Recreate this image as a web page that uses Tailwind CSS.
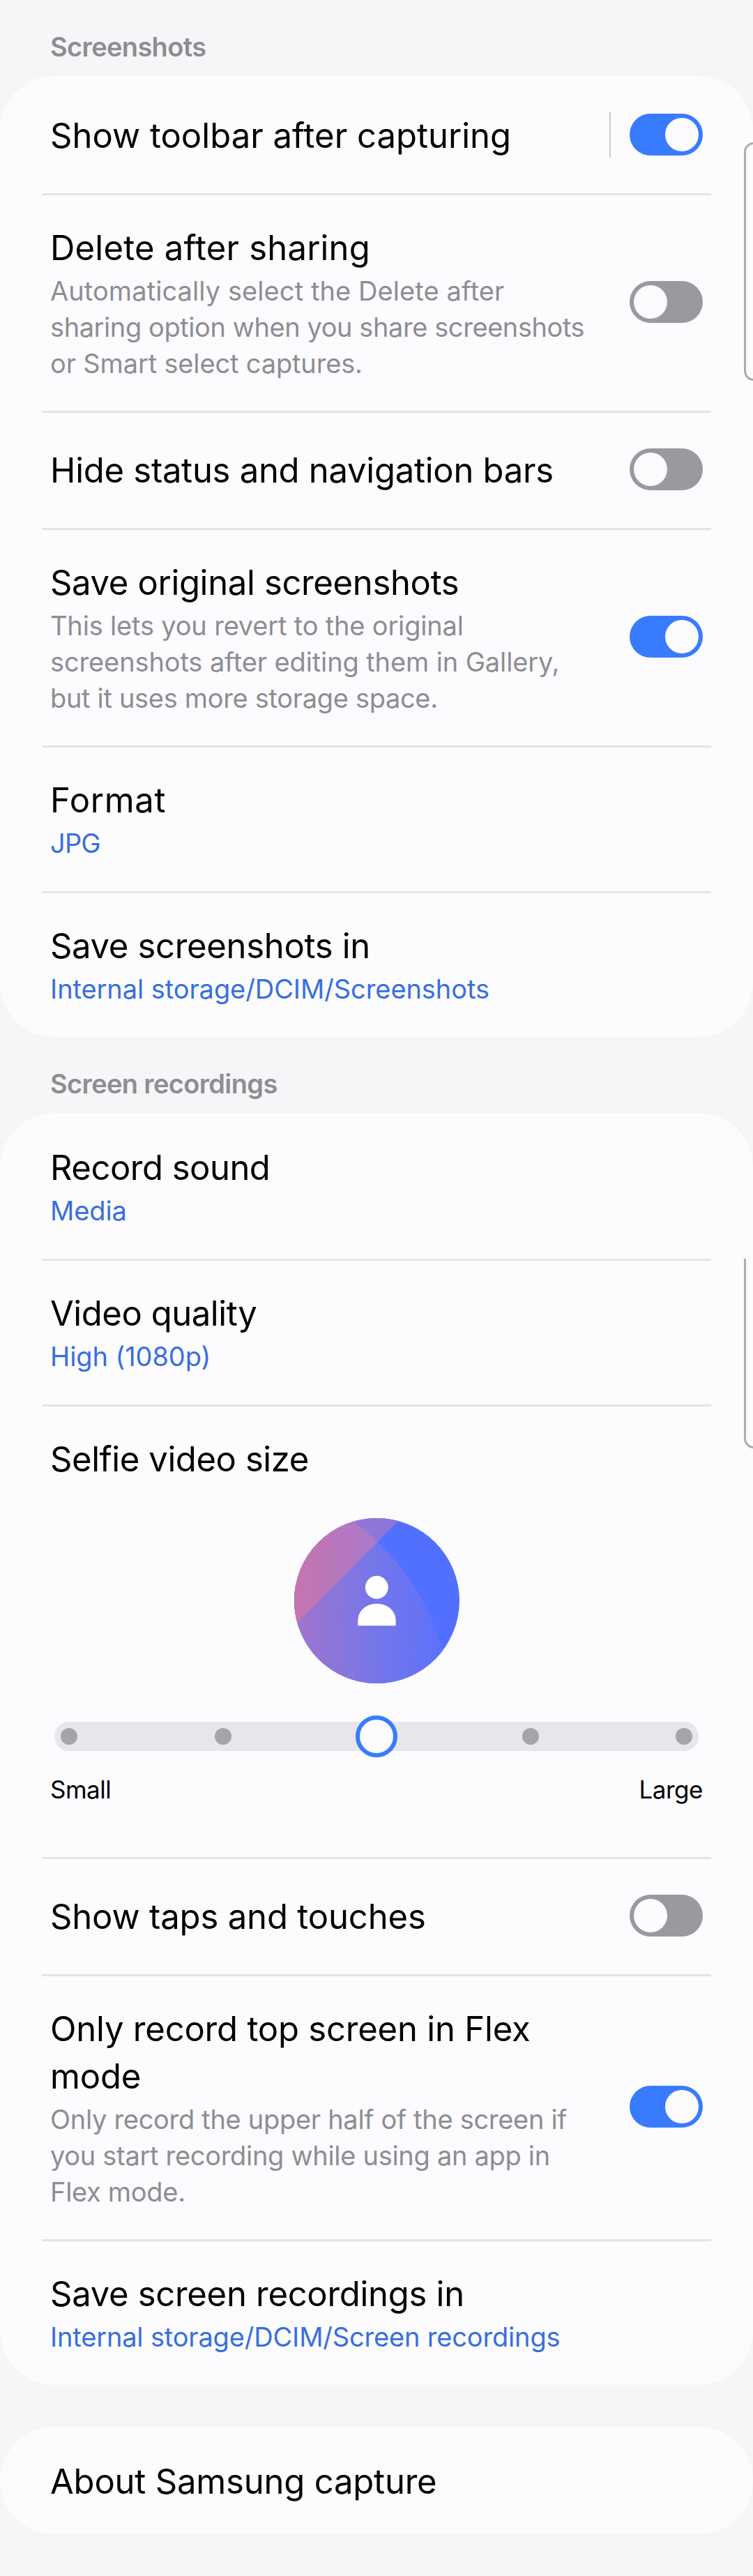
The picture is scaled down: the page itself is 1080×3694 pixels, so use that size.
<!DOCTYPE html>
<html lang="en">
<head>
<meta charset="utf-8">
<title>Screenshots and screen recorder</title>
<script src="https://cdn.jsdelivr.net/npm/@tailwindcss/browser@4"></script>
</head>
<body class="bg-[#f6f6f8]">
<main class="relative h-[3694px] w-[1080px] overflow-hidden font-['Inter',sans-serif] text-[49px] leading-[68px] tracking-[-0.2px] text-black">

  <h2 class="h-[109px] pl-[72px] pt-[41px] text-[38px] font-semibold leading-[52px] tracking-[-0.65px] text-[#8e8d92]">Screenshots</h2>
  <section class="rounded-[78px] bg-[#fcfcff]">
    <div class="flex h-[168px] items-center pl-[72px] pr-[72px]">
      <div class="flex-1 pt-1 tracking-[0.02px]">Show toolbar after capturing</div>
      <div class="mr-[27px] h-[66px] w-0.5 bg-[#c9c9cc]"></div>
      <div class="flex h-[60px] w-[105px] justify-end rounded-full bg-[#387bff] p-1.5"><div class="size-12 rounded-full bg-[#fcfcff]"></div></div>
    </div>
    <div class="mx-[60px] h-[3px] bg-[#e4e4e6]"></div>

    <div class="flex h-[309px] pl-[72px] pr-[72px]">
      <div class="flex-1 pt-[42px]">
        <div class="tracking-[0.2px]">Delete after sharing</div>
        <div class="mt-px whitespace-nowrap text-[38px] leading-[52px] tracking-[-0.15px] text-[#8e8d92]"><span class="tracking-[0.08px]">Automatically select the Delete after</span><br><span class="tracking-[-0.42px]">sharing option when you share screenshots</span><br>or Smart select captures.</div>
      </div>
      <div class="flex items-center pb-[3px]"><div class="flex h-[60px] w-[105px] rounded-full bg-[#9a999e] p-1.5"><div class="size-12 rounded-full bg-[#fcfcff]"></div></div></div>
    </div>
    <div class="mx-[60px] h-[3px] bg-[#e4e4e6]"></div>

    <div class="flex h-[165px] pl-[72px] pr-[72px]">
      <div class="flex-1 pt-[49px] tracking-[-0.27px]">Hide status and navigation bars</div>
      <div class="flex items-center pb-[3px]"><div class="flex h-[60px] w-[105px] rounded-full bg-[#9a999e] p-1.5"><div class="size-12 rounded-full bg-[#fcfcff]"></div></div></div>
    </div>
    <div class="mx-[60px] h-[3px] bg-[#e4e4e6]"></div>

    <div class="flex h-[309px] pl-[72px] pr-[72px]">
      <div class="flex-1 pt-[42px]">
        <div class="tracking-[-0.34px]">Save original screenshots</div>
        <div class="mt-px whitespace-nowrap text-[38px] leading-[52px] tracking-[-0.32px] text-[#8e8d92]"><span class="tracking-[-0.18px]">This lets you revert to the original</span><br><span class="tracking-[-0.12px]">screenshots after editing them in Gallery,</span><br>but it uses more storage space.</div>
      </div>
      <div class="flex items-center pb-[3px]"><div class="flex h-[60px] w-[105px] justify-end rounded-full bg-[#387bff] p-1.5"><div class="size-12 rounded-full bg-[#fcfcff]"></div></div></div>
    </div>
    <div class="mx-[60px] h-[3px] bg-[#e4e4e6]"></div>

    <div class="h-[206px] pl-[72px] pt-[42px]">
      <div class="tracking-[0.7px]">Format</div>
      <div class="mt-px text-[38px] leading-[52px] tracking-[-0.8px] text-[#386fde]">JPG</div>
    </div>
    <div class="mx-[60px] h-[3px] bg-[#e4e4e6]"></div>

    <div class="h-[206px] pl-[72px] pt-[42px]">
      <div class="tracking-[-0.32px]">Save screenshots in</div>
      <div class="mt-px text-[38px] leading-[52px] tracking-[-0.08px] text-[#386fde]">Internal storage/DCIM/Screenshots</div>
    </div>
  </section>

  <h2 class="h-[109px] pl-[72px] pt-[41px] text-[38px] font-semibold leading-[52px] tracking-[-0.65px] text-[#8e8d92]">Screen recordings</h2>
  <section class="rounded-[78px] bg-[#fcfcff]">
    <div class="h-[209px] pl-[72px] pt-[45px]">
      <div class="tracking-[-0.5px]">Record sound</div>
      <div class="mt-px text-[38px] leading-[52px] tracking-[-0.1px] text-[#386fde]">Media</div>
    </div>
    <div class="mx-[60px] h-[3px] bg-[#e4e4e6]"></div>

    <div class="h-[206px] pl-[72px] pt-[42px]">
      <div class="tracking-[-0.45px]">Video quality</div>
      <div class="mt-px text-[38px] leading-[52px] tracking-[-0.1px] text-[#386fde]">High (1080p)</div>
    </div>
    <div class="mx-[60px] h-[3px] bg-[#e4e4e6]"></div>

    <div class="h-[646px] pt-[42px]">
      <div class="pl-[72px] tracking-[-0.42px]">Selfie video size</div>
      <svg class="mx-auto mt-[50px] block h-[237px] w-[237px]" viewBox="0 0 237 237">
        <defs>
          <linearGradient id="lower" gradientUnits="userSpaceOnUse" x1="0" y1="0" x2="222" y2="0">
            <stop offset="0" stop-color="#a275ca"/><stop offset=".5" stop-color="#7776e9"/><stop offset="1" stop-color="#5a72fc"/>
          </linearGradient>
          <linearGradient id="pink" gradientUnits="userSpaceOnUse" x1="10" y1="0" x2="122" y2="0">
            <stop offset="0" stop-color="#c475b1"/><stop offset="1" stop-color="#a77acb"/>
          </linearGradient>
          <linearGradient id="top" gradientUnits="userSpaceOnUse" x1="84" y1="0" x2="150" y2="0">
            <stop offset="0" stop-color="#9276d6"/><stop offset="1" stop-color="#8a76db"/>
          </linearGradient>
          <clipPath id="disc"><circle cx="118.5" cy="118.5" r="118.5"/></clipPath>
          <clipPath id="sweep"><path d="M0 0H79.5L84.7 4.7A350 350 0 0 1 212.3 186L225 237H0Z"/></clipPath>
        </defs>
        <g clip-path="url(#disc)">
          <path fill="#5270ff" d="M0 0H237V237H0Z"/>
          <path fill="url(#lower)" d="M0 0H79.5L84.7 4.7A350 350 0 0 1 212.3 186L225 237H0Z"/>
          <path fill="url(#top)" d="M0 0H153L118.5 35 4 149.7 0 154Z"/>
          <path fill="url(#pink)" clip-path="url(#sweep)" d="M0 0H153L118.5 35 4 149.7 0 154Z"/>
        </g>
        <circle cx="118.3" cy="99.3" r="16.5" fill="#fff"/>
        <path fill="#fff" d="M91.3 154.3V147C91.3 133 103 122.7 118.5 122.7S145.7 133 145.7 147V154.3Z"/>
      </svg>
      <div class="relative mx-[78px] mt-[55px] flex h-[42px] items-center justify-between rounded-full bg-[#e6e6eb] px-[9px]">
        <div class="size-6 rounded-full bg-[#a5a5a7]"></div>
        <div class="size-6 rounded-full bg-[#a5a5a7]"></div>
        <div class="size-6"></div>
        <div class="size-6 rounded-full bg-[#a5a5a7]"></div>
        <div class="size-6 rounded-full bg-[#a5a5a7]"></div>
        <div class="absolute left-[432px] top-[-9px] size-[60px] rounded-full border-[6px] border-[#387bff] bg-[#fcfcff]"></div>
      </div>
      <div class="mt-[31px] flex justify-between pl-[72px] pr-[72px] text-[35px] leading-[48px] tracking-[-0.5px]"><span>Small</span><span>Large</span></div>
    </div>
    <div class="mx-[60px] h-[3px] bg-[#e4e4e6]"></div>

    <div class="flex h-[165px] pl-[72px] pr-[72px]">
      <div class="flex-1 pt-[49px] tracking-[-0.15px]">Show taps and touches</div>
      <div class="flex items-center pb-[3px]"><div class="flex h-[60px] w-[105px] rounded-full bg-[#9a999e] p-1.5"><div class="size-12 rounded-full bg-[#fcfcff]"></div></div></div>
    </div>
    <div class="mx-[60px] h-[3px] bg-[#e4e4e6]"></div>

    <div class="flex h-[377px] pl-[72px] pr-[72px]">
      <div class="flex-1 pt-[42px]">
        <div>Only record top screen in Flex<br>mode</div>
        <div class="mt-px whitespace-nowrap text-[38px] leading-[52px] tracking-[-0.3px] text-[#8e8d92]">Only record the upper half of the screen if<br>you start recording while using an app in<br>Flex mode.</div>
      </div>
      <div class="flex items-center pb-[3px]"><div class="flex h-[60px] w-[105px] justify-end rounded-full bg-[#387bff] p-1.5"><div class="size-12 rounded-full bg-[#fcfcff]"></div></div></div>
    </div>
    <div class="mx-[60px] h-[3px] bg-[#e4e4e6]"></div>

    <div class="h-[206px] pl-[72px] pt-[42px]">
      <div class="tracking-[-0.29px]">Save screen recordings in</div>
      <div class="mt-px text-[38px] leading-[52px] tracking-[-0.17px] text-[#386fde]">Internal storage/DCIM/Screen recordings</div>
    </div>
  </section>

  <section class="mt-[60px] h-[154px] rounded-[77px] bg-[#fcfcff] pl-[72px] pt-[45px]">About Samsung capture</section>

  <!-- edge panel handle, partly off the right side -->
  <div class="absolute left-[1067px] top-[204px] h-[342px] w-10 rounded-[14px] border-[3px] border-[#adadaf] bg-[#fcfcff]"></div>
  <div class="absolute left-[1067px] top-[1805px] h-[272px] w-10 rounded-b-[14px] border-[3px] border-t-0 border-[#adadaf] bg-[#fcfcff]"></div>
</main>
</body>
</html>
